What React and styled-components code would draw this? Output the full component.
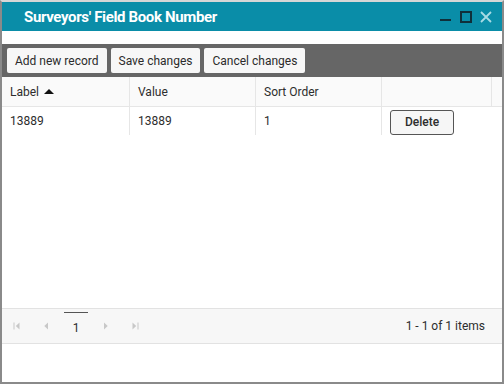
import React from 'react';
import styled, { createGlobalStyle } from 'styled-components';

const Global = createGlobalStyle`
  html, body { margin: 0; padding: 0; background: #fff; }
  * { box-sizing: border-box; }
`;

const Window = styled.div`
  width: 504px;
  height: 384px;
  display: flex;
  flex-direction: column;
  background: #fff;
  border-style: solid;
  border-width: 2px;
  border-color: #d6d6d6 #8a8a8a #8a8a8a #8a8a8a;
`;

const TitleBar = styled.div`
  height: 29px;
  background: #0a8da8;
  display: flex;
  align-items: center;
  padding: 0 10px 0 22px;
`;

const Title = styled.div`
  flex: 1;
  color: #fff;
  font-family: Roboto, "Liberation Sans", sans-serif;
  font-weight: 700;
  font-size: 15px;
  letter-spacing: -0.35px;
`;

const TitleActions = styled.div`
  display: flex;
  align-items: center;
  gap: 8px;
`;

const Body = styled.div`
  flex: 1;
  display: flex;
  flex-direction: column;
  padding: 13px 0 0 0;
  font-family: Roboto, "Liberation Sans", sans-serif;
  font-size: 12px;
  color: #2d2d2d;
`;

const Toolbar = styled.div`
  height: 33px;
  background: #666;
  display: flex;
  align-items: center;
  gap: 4px;
  padding: 0 5px;
`;

const ToolButton = styled.div`
  height: 25px;
  padding: 0 8px;
  background: #f7f7f7;
  border-radius: 2px;
  display: flex;
  align-items: center;
  color: #2b2b2b;
`;

const Grid = styled.div`
  flex: 1;
  display: flex;
  flex-direction: column;
`;

const Row = styled.div`
  display: grid;
  grid-template-columns: 128px 126px 126px 110px 1fr;
  height: ${p => p.$h}px;
  border-bottom: ${p => p.$header ? '1px solid #e6e6e6' : 'none'};
  background: ${p => p.$header ? '#fafafa' : '#fff'};
`;

const Cell = styled.div`
  display: flex;
  align-items: center;
  padding: 0 8px;
  border-right: ${p => p.$last ? 'none' : '1px solid #e6e6e6'};
  color: #2d2d2d;
  gap: 4px;
`;

const Caret = styled.span`
  width: 0;
  height: 0;
  border-left: 5px solid transparent;
  border-right: 5px solid transparent;
  border-bottom: 5px solid #111;
  margin-left: 1px;
`;

const DeleteButton = styled.div`
  height: 25px;
  width: 64px;
  border: 1px solid #555;
  border-radius: 3px;
  background: #f6f6f6;
  display: flex;
  align-items: center;
  justify-content: center;
  font-weight: 500;
  color: #2d2d2d;
  margin-top: 2px;
`;

const Filler = styled.div`
  flex: 1;
`;

const Pager = styled.div`
  height: 36px;
  background: #f7f7f7;
  border-top: 1px solid #e2e2e2;
  border-bottom: 1px solid #e2e2e2;
  display: flex;
  align-items: center;
  padding: 0 17px 0 0;
`;

const PagerNav = styled.div`
  flex: 1;
  display: flex;
  align-items: center;
`;

const NavIcon = styled.div`
  width: 29.5px;
  display: flex;
  justify-content: center;
  color: #c8c8c8;
`;

const PageNum = styled.div`
  width: 24px;
  margin: 2px 3px 0;
  height: 30px;
  display: flex;
  align-items: center;
  justify-content: center;
  border-top: 1px solid #555;
  color: #2d2d2d;
`;

const Info = styled.div`
  color: #2d2d2d;
`;

const Bottom = styled.div`
  height: 38px;
`;

const First = () => (
  <svg width="8" height="8" viewBox="0 0 8 8">
    <rect x="0.5" y="0.5" width="1" height="7" fill="currentColor" />
    <path d="M6.5 0.5 L2.8 4 L6.5 7.5 Z" fill="currentColor" />
  </svg>
);
const Prev = () => (
  <svg width="8" height="8" viewBox="0 0 8 8">
    <path d="M6 0.5 L2.3 4 L6 7.5 Z" fill="currentColor" />
  </svg>
);
const Next = () => (
  <svg width="8" height="8" viewBox="0 0 8 8">
    <path d="M2 0.5 L5.7 4 L2 7.5 Z" fill="currentColor" />
  </svg>
);
const Last = () => (
  <svg width="8" height="8" viewBox="0 0 8 8">
    <path d="M1.5 0.5 L5.2 4 L1.5 7.5 Z" fill="currentColor" />
    <rect x="6.5" y="0.5" width="1" height="7" fill="currentColor" />
  </svg>
);

export default function App() {
  return (
    <>
      <Global />
      <Window>
        <TitleBar>
          <Title>Surveyors' Field Book Number</Title>
          <TitleActions>
            <svg width="12" height="12" viewBox="0 0 12 12">
              <rect x="0" y="8" width="11" height="2" fill="#0f2f3a" />
            </svg>
            <svg width="12" height="12" viewBox="0 0 12 12">
              <rect x="1" y="1" width="10" height="10" fill="none" stroke="#0f2f3a" strokeWidth="2" />
            </svg>
            <svg width="12" height="12" viewBox="0 0 12 12">
              <path d="M1 1 L11 11 M11 1 L1 11" stroke="#a9dbe5" strokeWidth="1.8" />
            </svg>
          </TitleActions>
        </TitleBar>
        <Body>
          <Toolbar>
            <ToolButton>Add new record</ToolButton>
            <ToolButton>Save changes</ToolButton>
            <ToolButton>Cancel changes</ToolButton>
          </Toolbar>
          <Grid>
            <Row $header $h={30}>
              <Cell>Label <Caret /></Cell>
              <Cell>Value</Cell>
              <Cell>Sort Order</Cell>
              <Cell />
              <Cell $last />
            </Row>
            <Row $h={28}>
              <Cell>13889</Cell>
              <Cell>13889</Cell>
              <Cell>1</Cell>
              <Cell $last><DeleteButton>Delete</DeleteButton></Cell>
              <Cell $last />
            </Row>
            <Filler />
            <Pager>
              <PagerNav>
                <NavIcon><First /></NavIcon>
                <NavIcon><Prev /></NavIcon>
                <PageNum>1</PageNum>
                <NavIcon><Next /></NavIcon>
                <NavIcon><Last /></NavIcon>
              </PagerNav>
              <Info>1 - 1 of 1 items</Info>
            </Pager>
            <Bottom />
          </Grid>
        </Body>
      </Window>
    </>
  );
}
